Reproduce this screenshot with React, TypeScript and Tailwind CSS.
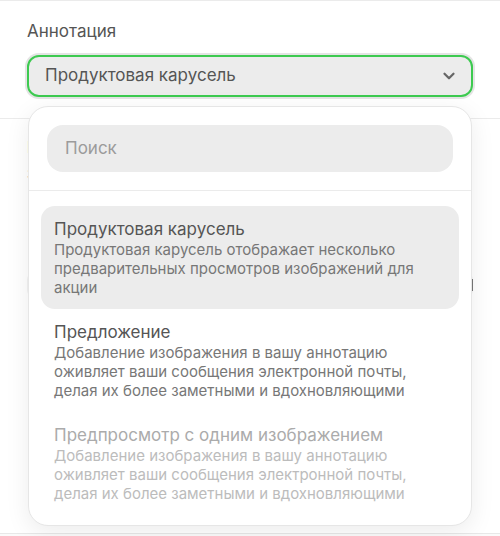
import { ChevronDown } from 'lucide-react';

const options = [
  {
    title: 'Продуктовая карусель',
    description:
      'Продуктовая карусель отображает несколько предварительных просмотров изображений для акции',
    active: true,
    disabled: false,
  },
  {
    title: 'Предложение',
    description:
      'Добавление изображения в вашу аннотацию оживляет ваши сообщения электронной почты, делая их более заметными и вдохновляющими',
    active: false,
    disabled: false,
  },
  {
    title: 'Предпросмотр с одним изображением',
    description:
      'Добавление изображения в вашу аннотацию оживляет ваши сообщения электронной почты, делая их более заметными и вдохновляющими',
    active: false,
    disabled: true,
  },
];

export default function App() {
  return (
    <div
      className="relative h-[536px] w-[500px] overflow-hidden border-t border-[#ebebeb] bg-white"
      style={{ fontFamily: 'Inter, "Noto Sans", sans-serif' }}
    >
      {/* field: annotation */}
      <div className="border-b border-[#ebebeb] px-[27px] pb-[21px] pt-[19px]">
        <p className="text-[17px] leading-[22px] text-[#555]">Аннотация</p>
        <button
          type="button"
          className="mt-[13px] flex h-[42px] w-full items-center justify-between rounded-[12px] border-2 border-[#3dca50] bg-[#ececec] pl-[16px] pr-[13px] ring-2 ring-[#e4e4e4]"
        >
          <span className="text-[17px] text-[#555]">Продуктовая карусель</span>
          <ChevronDown className="h-[18px] w-[18px] text-[#666]" strokeWidth={3} />
        </button>
      </div>

      {/* field behind popover */}
      <div className="px-[27px] pt-[17px]">
        <p className="text-[16px] leading-[22px] text-[#444]">Прехедер</p>
        <p className="mt-[8px] text-[13px] leading-[17.5px] text-[#888]">
          Заголовок отображается рядом с темой письма
        </p>
        <div className="mt-[88px] flex h-[26px] items-center justify-end rounded-[8px] bg-[#f2f2f2]">
          <span className="h-[12px] w-[2px] bg-[#777]" />
        </div>
      </div>

      <div className="absolute bottom-0 left-0 right-0 h-[3px] border-t border-[#e8e8e8] bg-[#fafafa]" />

      {/* popover */}
      <div className="absolute left-[28px] top-[105px] w-[444px] rounded-[20px] border border-[#e6e6e6] bg-white shadow-[0_6px_24px_rgba(0,0,0,0.08)]">
        <div className="p-[18px]">
          <div className="flex h-[47px] items-center rounded-[16px] bg-[#ececec] px-[18px]">
            <span className="text-[17px] text-[#9b9b9b]">Поиск</span>
          </div>
        </div>
        <div className="border-t border-[#ebebeb] px-[12px] pb-[10px] pt-[15px]">
          {options.map((opt) => (
            <div
              key={opt.title}
              className={`rounded-[14px] px-[13px] py-[12px] ${opt.active ? 'bg-[#ececec]' : ''}`}
            >
              <p
                className={`text-[17px] leading-[22px] ${opt.disabled ? 'text-[#ababab]' : 'text-[#555]'}`}
              >
                {opt.title}
              </p>
              <p
                className={`text-[15px] leading-[19px] ${opt.disabled ? 'text-[#bcbcbc]' : 'text-[#777]'}`}
              >
                {opt.description}
              </p>
            </div>
          ))}
        </div>
      </div>
    </div>
  );
}
